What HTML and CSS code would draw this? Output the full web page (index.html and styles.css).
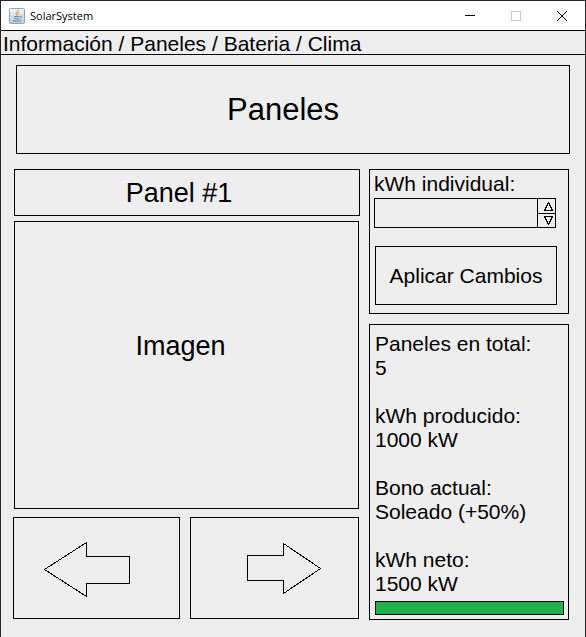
FILE: index.html
```html
<!DOCTYPE html>
<html lang="es">
<head>
<meta charset="utf-8">
<title>SolarSystem</title>
<link rel="stylesheet" href="styles.css">
</head>
<body>
<div class="window">
  <header class="titlebar">
    <svg class="app-icon" width="16" height="16" viewBox="0 0 16 16" aria-hidden="true">
      <defs>
        <linearGradient id="tile" x1="0" y1="0" x2="0" y2="1">
          <stop offset="0" stop-color="#f6f8fa"/>
          <stop offset="1" stop-color="#b9c9d6"/>
        </linearGradient>
      </defs>
      <rect x=".5" y=".5" width="15" height="15" rx="1" fill="url(#tile)" stroke="#8ba4b8"/>
      <path d="M9 2c.6 1.500-2.600 2.300-2 3.800.3.700 1 1 .8 1.700M10.300 4.200c-1.500.7-1.800 1.300-1.200 2 .4.500.1.900-.4 1.300" fill="none" stroke="#e8852d" stroke-width="1"/>
      <path d="M5 8.700h5.500M5.500 10.600c1.500.5 3.500.5 4.800 0M11.200 8.500c2-.4 2 1.500.2 2M4 12.500c2.300.9 6.300.9 8.300-.2" fill="none" stroke="#5f86a3" stroke-width="1"/>
    </svg>
    <span class="app-name">SolarSystem</span>
    <div class="window-controls">
      <button class="window-button" type="button" aria-label="Minimizar">
        <svg width="10" height="10" viewBox="0 0 10 10" shape-rendering="crispEdges"><path d="M0 4.500h10"/></svg>
      </button>
      <button class="window-button" type="button" aria-label="Maximizar" disabled>
        <svg width="10" height="10" viewBox="0 0 10 10" shape-rendering="crispEdges"><path d="M.5.5h9v9h-9z"/></svg>
      </button>
      <button class="window-button" type="button" aria-label="Cerrar">
        <svg width="10" height="10" viewBox="0 0 10 10"><path d="M0 0l10 10M10 0L0 10"/></svg>
      </button>
    </div>
  </header>

  <nav class="menu">
    <a href="#informacion">Información</a> / <a href="#paneles">Paneles</a> / <a href="#bateria">Bateria</a> / <a href="#clima">Clima</a>
  </nav>

  <main class="content">
    <h1 class="box heading">Paneles</h1>
    <div class="columns">
      <section class="viewer">
        <h2 class="box panel-name">Panel #1</h2>
        <div class="box picture">Imagen</div>
        <div class="pager">
          <button class="box pager-button" type="button" aria-label="Panel anterior">
            <svg class="arrow-left" width="88" height="58" viewBox="0 0 88 58" shape-rendering="crispEdges"><path d="M1.500 28.500L43.500 1.500V15.500H86.500V42.500H43.500V55.500Z"/></svg>
          </button>
          <button class="box pager-button" type="button" aria-label="Panel siguiente">
            <svg class="arrow-right" width="76" height="58" viewBox="0 0 76 58" shape-rendering="crispEdges"><path d="M74.500 27.500L37.500 2.500V14.500H1.500V39.500H37.500V52.500Z"/></svg>
          </button>
        </div>
      </section>

      <aside class="side">
        <form class="box settings">
          <label class="settings-label" for="kwh">kWh individual:</label>
          <div class="spinner">
            <input id="kwh" class="spinner-input" type="text" inputmode="numeric">
            <div class="spinner-steps">
              <button class="step" type="button" aria-label="Aumentar">
                <svg width="9" height="9" viewBox="0 0 9 9" shape-rendering="crispEdges"><path d="M4.500.5L8.500 8.500H.5Z"/></svg>
              </button>
              <button class="step" type="button" aria-label="Disminuir">
                <svg width="9" height="9" viewBox="0 0 9 9" shape-rendering="crispEdges"><path d="M4.500 8.500L8.500.5H.5Z"/></svg>
              </button>
            </div>
          </div>
          <button class="apply" type="button">Aplicar Cambios</button>
        </form>
        <section class="box summary">
          <dl class="stats">
            <div><dt>Paneles en total:</dt><dd>5</dd></div>
            <div><dt>kWh producido:</dt><dd>1000 kW</dd></div>
            <div><dt>Bono actual:</dt><dd>Soleado (+50%)</dd></div>
            <div><dt>kWh neto:</dt><dd>1500 kW</dd></div>
          </dl>
          <progress class="output" value="100" max="100" aria-label="kWh neto"></progress>
        </section>
      </aside>
    </div>
  </main>
</div>
</body>
</html>
```
FILE: styles.css
```css
* {
  box-sizing: border-box;
}

body {
  margin: 0;
  background: #eee;
  color: #000;
  font: 21px/24px "Liberation Sans", Arial, sans-serif;
}

button,
input {
  margin: 0;
  padding: 0;
  border: 0;
  border-radius: 0;
  background: none;
  color: inherit;
  font: inherit;
}

svg {
  display: block;
  fill: none;
  stroke: #000;
}

.app-icon {
  stroke: none;
}

.window {
  min-height: 100vh;
  border: 1px solid #262626;
  border-bottom: 0;
}

.titlebar {
  display: flex;
  align-items: center;
  height: 29px;
  padding-left: 8px;
  background: #fff;
}

.app-name {
  margin-left: 5px;
  font: 11px/16px "Open Sans", "Noto Sans", sans-serif;
}

.window-controls {
  display: flex;
  align-self: stretch;
  margin-left: auto;
}

.window-button {
  display: flex;
  align-items: center;
  justify-content: center;
  width: 46px;
}

.window-button:disabled svg {
  stroke: #ccc;
}

.menu {
  height: 25px;
  padding-left: 2px;
  border: solid #000;
  border-width: 1px 0;
  line-height: 25px;
}

.menu a {
  color: inherit;
  text-decoration: none;
}

.box {
  border: 1px solid #000;
}

.content {
  padding: 10px 15px 16px 12px;
}

.heading {
  display: flex;
  align-items: center;
  justify-content: center;
  height: 89px;
  margin: 0 0 15px 3px;
  padding-right: 20px;
  font-size: 31px;
  font-weight: 400;
}

.columns {
  display: grid;
  grid-template-columns: minmax(0, 347fr) minmax(0, 200fr);
  gap: 9px;
  padding-right: 1px;
}

.viewer {
  display: flex;
  flex-direction: column;
}

.panel-name,
.picture {
  display: flex;
  align-items: center;
  justify-content: center;
  margin: 0 0 0 1px;
  font-size: 27px;
  font-weight: 400;
}

.panel-name {
  height: 47px;
  padding-right: 16px;
}

.picture {
  height: 288px;
  margin: 5px 1px 8px;
  padding: 0 12px 38px 0;
}

.pager {
  display: grid;
  grid-template-columns: 167fr 169fr;
  gap: 10px;
  margin-right: 1px;
}

.pager-button {
  display: flex;
  align-items: center;
  justify-content: center;
  height: 102px;
  border: 1px solid #000;
}

.arrow-left {
  margin-right: 20px;
  margin-top: 4px;
}

.arrow-right {
  margin-left: 18px;
  margin-top: 4px;
}

.side {
  display: flex;
  flex-direction: column;
  gap: 10px;
}

.settings {
  display: flex;
  flex-direction: column;
  height: 145px;
  padding: 2px 11px 8px 4px;
}

.settings-label {
  margin-bottom: 2px;
}

.spinner {
  display: flex;
  height: 30px;
  margin: 0 1px 18px 0;
  border: 1px solid #000;
}

.spinner-input {
  flex: 1;
  min-width: 0;
  padding: 0 4px;
}

.spinner-steps {
  display: grid;
  grid-template-rows: 1fr 1fr;
  width: 18px;
  border-left: 1px solid #000;
}

.step {
  display: flex;
  align-items: center;
  justify-content: center;
  padding-left: 4px;
}

.step + .step {
  border-top: 1px solid #000;
}

.apply {
  flex: 1;
  margin-left: 1px;
  border: 1px solid #000;
}

.summary {
  display: flex;
  flex-direction: column;
  height: 296px;
  padding: 7px 4px 4px 5px;
}

.stats {
  display: grid;
  gap: 24px;
  margin: 0;
}

.stats dd {
  margin: 0;
}

.output {
  width: 100%;
  height: 14px;
  margin-top: auto;
  border: 1px solid #000;
  background: #eee;
  appearance: none;
}

.output::-webkit-progress-bar {
  background: #eee;
}

.output::-webkit-progress-value {
  background: #22b14c;
}
```
